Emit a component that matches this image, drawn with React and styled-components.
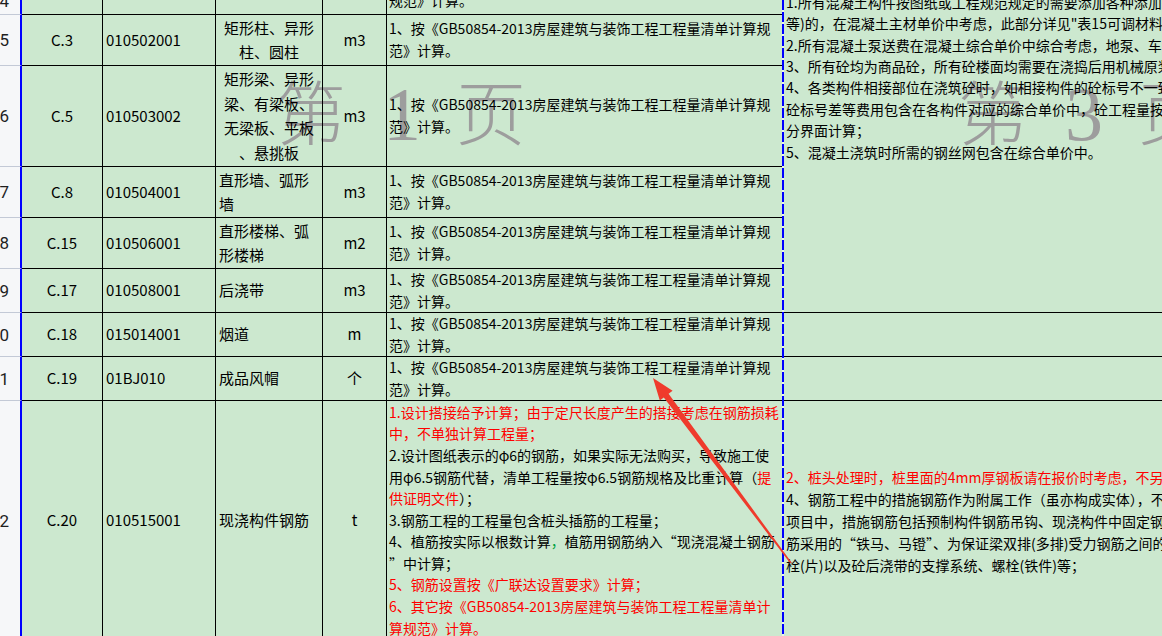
import React from "react";
import styled, { createGlobalStyle } from "styled-components";

const GlobalStyle = createGlobalStyle`
  * { box-sizing: border-box; }
  html, body { margin: 0; padding: 0; background: #fff; overflow: hidden; }
  body { font-family: "Noto Sans CJK SC", "Noto Sans", sans-serif; }
`;

const tones = {
  red: "#ff0000",
  green: "#00a040",
  ink: "#000",
};

const Viewport = styled.div`
  position: relative;
  width: 1162px;
  height: 636px;
  overflow: hidden;
`;

const Sheet = styled.div`
  display: grid;
  grid-template-columns: 22px 81px 113px 107px 64px 395px 2px 440px;
  grid-template-rows: 15px 51px 101px 51px 51px 44px 44px 44px 240px;
  background: #cce8cf;
  color: #000;
  font-family: "Noto Sans CJK SC", "Noto Sans", sans-serif;
`;

const RowHead = styled.div`
  display: flex;
  align-items: ${(p) => (p.$edge ? "flex-end" : "center")};
  justify-content: flex-end;
  padding-right: 11px;
  padding-bottom: ${(p) => (p.$edge ? "3px" : "0")};
  background: #f6f7f9;
  border-right: 2px solid #0000ff;
  border-bottom: 1px solid #c3c9d6;
  font: 17px/20px Roboto, "Noto Sans", sans-serif;
  color: #1f1f1f;
  white-space: nowrap;
  overflow: hidden;
  z-index: 1;
`;

const Cell = styled.div`
  display: flex;
  align-items: ${(p) => (p.$edge ? "flex-end" : "center")};
  justify-content: ${(p) => (p.$center ? "center" : "flex-start")};
  padding: ${(p) => (p.$edge ? "0 3px 2px" : "0 3px")};
  border-right: 1px solid #000;
  border-bottom: 1px solid #000;
  font-size: 15px;
  line-height: 24.5px;
  white-space: nowrap;
  overflow: hidden;
  min-width: 0;
  z-index: 1;
`;

const RuleCell = styled(Cell)`
  border-right: none;
  padding: ${(p) => (p.$edge ? "0 2px 2px" : "0 2px")};
  font-size: 14px;
  line-height: 21.6px;
`;

const PageBreak = styled.div`
  grid-column: 7;
  grid-row: 1 / span 9;
  background: repeating-linear-gradient(
    to bottom,
    #0000ff 0 10px,
    #e9f3ea 10px 12px
  );
  z-index: 1;
`;

const NoteCell = styled.div`
  grid-row: span ${(p) => p.$span || 1};
  display: flex;
  flex-direction: column;
  justify-content: ${(p) => (p.$bottom ? "flex-end" : "center")};
  padding: ${(p) => (p.$bottom ? `0 2px ${p.$bottom}px` : "0 2px")};
  border-bottom: 1px solid #000;
  font-size: 14px;
  line-height: ${(p) => (p.$bottom ? "21.4px" : "22px")};
  white-space: nowrap;
  overflow: hidden;
  min-width: 0;
  z-index: 1;
`;

const Lines = styled.div`
  display: flex;
  flex-direction: column;
  text-align: ${(p) => (p.$center ? "center" : "left")};
`;

const Line = styled.div`
  white-space: pre;
`;

const Tone = styled.span`
  color: ${(p) => tones[p.$tone] || tones.ink};
`;

const Watermark = styled.div`
  position: absolute;
  top: 75px;
  left: ${(p) => p.$left}px;
  display: flex;
  align-items: baseline;
  gap: 37px;
  color: #9d9d9d;
  pointer-events: none;
  z-index: 0;
`;

const MarkHan = styled.span`
  width: 70px;
  font: 300 70px/70px "Noto Sans CJK SC", sans-serif;
`;

const MarkNum = styled.span`
  width: 36px;
  text-align: center;
  font: 76px/70px "Liberation Serif", serif;
`;

const Overlay = styled.svg`
  position: absolute;
  left: 0;
  top: 0;
  pointer-events: none;
  z-index: 3;
`;

const STD = ["1、按《GB50854-2013房屋建筑与装饰工程工程量清单计算规", "范》计算。"];

const REBAR = [
  [["1.设计搭接给予计算；由于定尺长度产生的搭接考虑在钢筋损耗", "red"]],
  [["中，不单独计算工程量；", "red"]],
  "2.设计图纸表示的φ6的钢筋，如果实际无法购买，导致施工使",
  ["用φ6.5钢筋代替，清单工程量按φ6.5钢筋规格及比重计算（", ["提", "red"]],
  [["供证明文件", "red"], "）；"],
  "3.钢筋工程的工程量包含桩头插筋的工程量；",
  ["4、植筋按实际以根数计算", ["，", "green"], "植筋用钢筋纳入“现浇混凝土钢筋"],
  "”中计算；",
  [["5、钢筋设置按《广联达设置要求》计算；", "red"]],
  [["6、其它按《GB50854-2013房屋建筑与装饰工程工程量清单计", "red"]],
  [["算规范》计算。", "red"]],
];

const CONCRETE_NOTES = [
  "1.所有混凝土构件按图纸或工程规范规定的需要添加各种添加剂（防冻剂、早强剂",
  "等)的，在混凝土主材单价中考虑，此部分详见\"表15可调材料价格表\"",
  "2.所有混凝土泵送费在混凝土综合单价中综合考虑，地泵、车泵均不另计",
  "3、所有砼均为商品砼，所有砼楼面均需要在浇捣后用机械原浆收光",
  "4、各类构件相接部位在浇筑砼时，如相接构件的砼标号不一致时，",
  "砼标号差等费用包含在各构件对应的综合单价中，砼工程量按构件",
  "分界面计算；",
  "5、混凝土浇筑时所需的钢丝网包含在综合单价中。",
];

const REBAR_NOTES = [
  [["2、桩头处理时，桩里面的4mm厚钢板请在报价时考虑，不另行计算；", "red"]],
  "4、钢筋工程中的措施钢筋作为附属工作（虽亦构成实体），不单独列项",
  "项目中，措施钢筋包括预制构件钢筋吊钩、现浇构件中固定钢筋位置",
  "筋采用的“铁马、马镫”、为保证梁双排(多排)受力钢筋之间的间距",
  "栓(片)以及砼后浇带的支撑系统、螺栓(铁件)等；",
];

const rows = [
  { n: "4", a: "", b: "", c: [], d: "", e: ["规范》计算。"], edge: true },
  { n: "5", a: "C.3", b: "010502001", c: ["矩形柱、异形", "柱、圆柱"], cc: true, d: "m3", e: STD },
  {
    n: "6",
    a: "C.5",
    b: "010503002",
    c: ["矩形梁、异形", "梁、有梁板、", "无梁板、平板", "、悬挑板"],
    cc: true,
    d: "m3",
    e: STD,
  },
  { n: "7", a: "C.8", b: "010504001", c: ["直形墙、弧形", "墙"], d: "m3", e: STD },
  { n: "8", a: "C.15", b: "010506001", c: ["直形楼梯、弧", "形楼梯"], d: "m2", e: STD },
  { n: "9", a: "C.17", b: "010508001", c: ["后浇带"], d: "m3", e: STD },
  { n: "10", a: "C.18", b: "015014001", c: ["烟道"], d: "m", e: STD },
  { n: "11", a: "C.19", b: "01BJ010", c: ["成品风帽"], d: "个", e: STD },
  { n: "12", a: "C.20", b: "010515001", c: ["现浇构件钢筋"], d: "t", e: REBAR },
];

const notes = {
  0: { span: 6, bottom: 149, lines: CONCRETE_NOTES },
  6: { lines: [] },
  7: { lines: [] },
  8: { lines: REBAR_NOTES },
};

function Rich({ line }) {
  if (typeof line === "string") return <Line>{line}</Line>;
  return (
    <Line>
      {line.map((seg, i) =>
        typeof seg === "string" ? (
          <Tone key={i}>{seg}</Tone>
        ) : (
          <Tone key={i} $tone={seg[1]}>
            {seg[0]}
          </Tone>
        )
      )}
    </Line>
  );
}

function TextBlock({ lines, center }) {
  return (
    <Lines $center={center}>
      {lines.map((l, i) => (
        <Rich key={i} line={l} />
      ))}
    </Lines>
  );
}

function Arrow() {
  return (
    <Overlay width="1162" height="636" viewBox="0 0 1162 636">
      <polygon
        points="653,378 672.6,390.8 668.6,393.8 791.6,562.5 790.4,563.5 663.8,397.4 659.8,400.4"
        fill="#ef3b2c"
      />
    </Overlay>
  );
}

export default function App() {
  return (
    <>
      <GlobalStyle />
      <Viewport>
        <Sheet>
          {rows.map((r, i) => (
            <React.Fragment key={r.n}>
              <RowHead $edge={r.edge}>{r.n}</RowHead>
              <Cell $center $edge={r.edge}>{r.a}</Cell>
              <Cell $edge={r.edge}>{r.b}</Cell>
              <Cell $center={r.cc} $edge={r.edge}>
                <TextBlock lines={r.c} center={r.cc} />
              </Cell>
              <Cell $center $edge={r.edge}>{r.d}</Cell>
              <RuleCell $edge={r.edge}>
                <TextBlock lines={r.e} />
              </RuleCell>
              {i === 0 && <PageBreak />}
              {notes[i] && (
                <NoteCell $span={notes[i].span} $bottom={notes[i].bottom}>
                  <TextBlock lines={notes[i].lines} />
                </NoteCell>
              )}
            </React.Fragment>
          ))}
        </Sheet>
        <Watermark $left={276}>
          <MarkHan>第</MarkHan>
          <MarkNum>1</MarkNum>
          <MarkHan>页</MarkHan>
        </Watermark>
        <Watermark $left={958}>
          <MarkHan>第</MarkHan>
          <MarkNum>3</MarkNum>
          <MarkHan>页</MarkHan>
        </Watermark>
        <Arrow />
      </Viewport>
    </>
  );
}
